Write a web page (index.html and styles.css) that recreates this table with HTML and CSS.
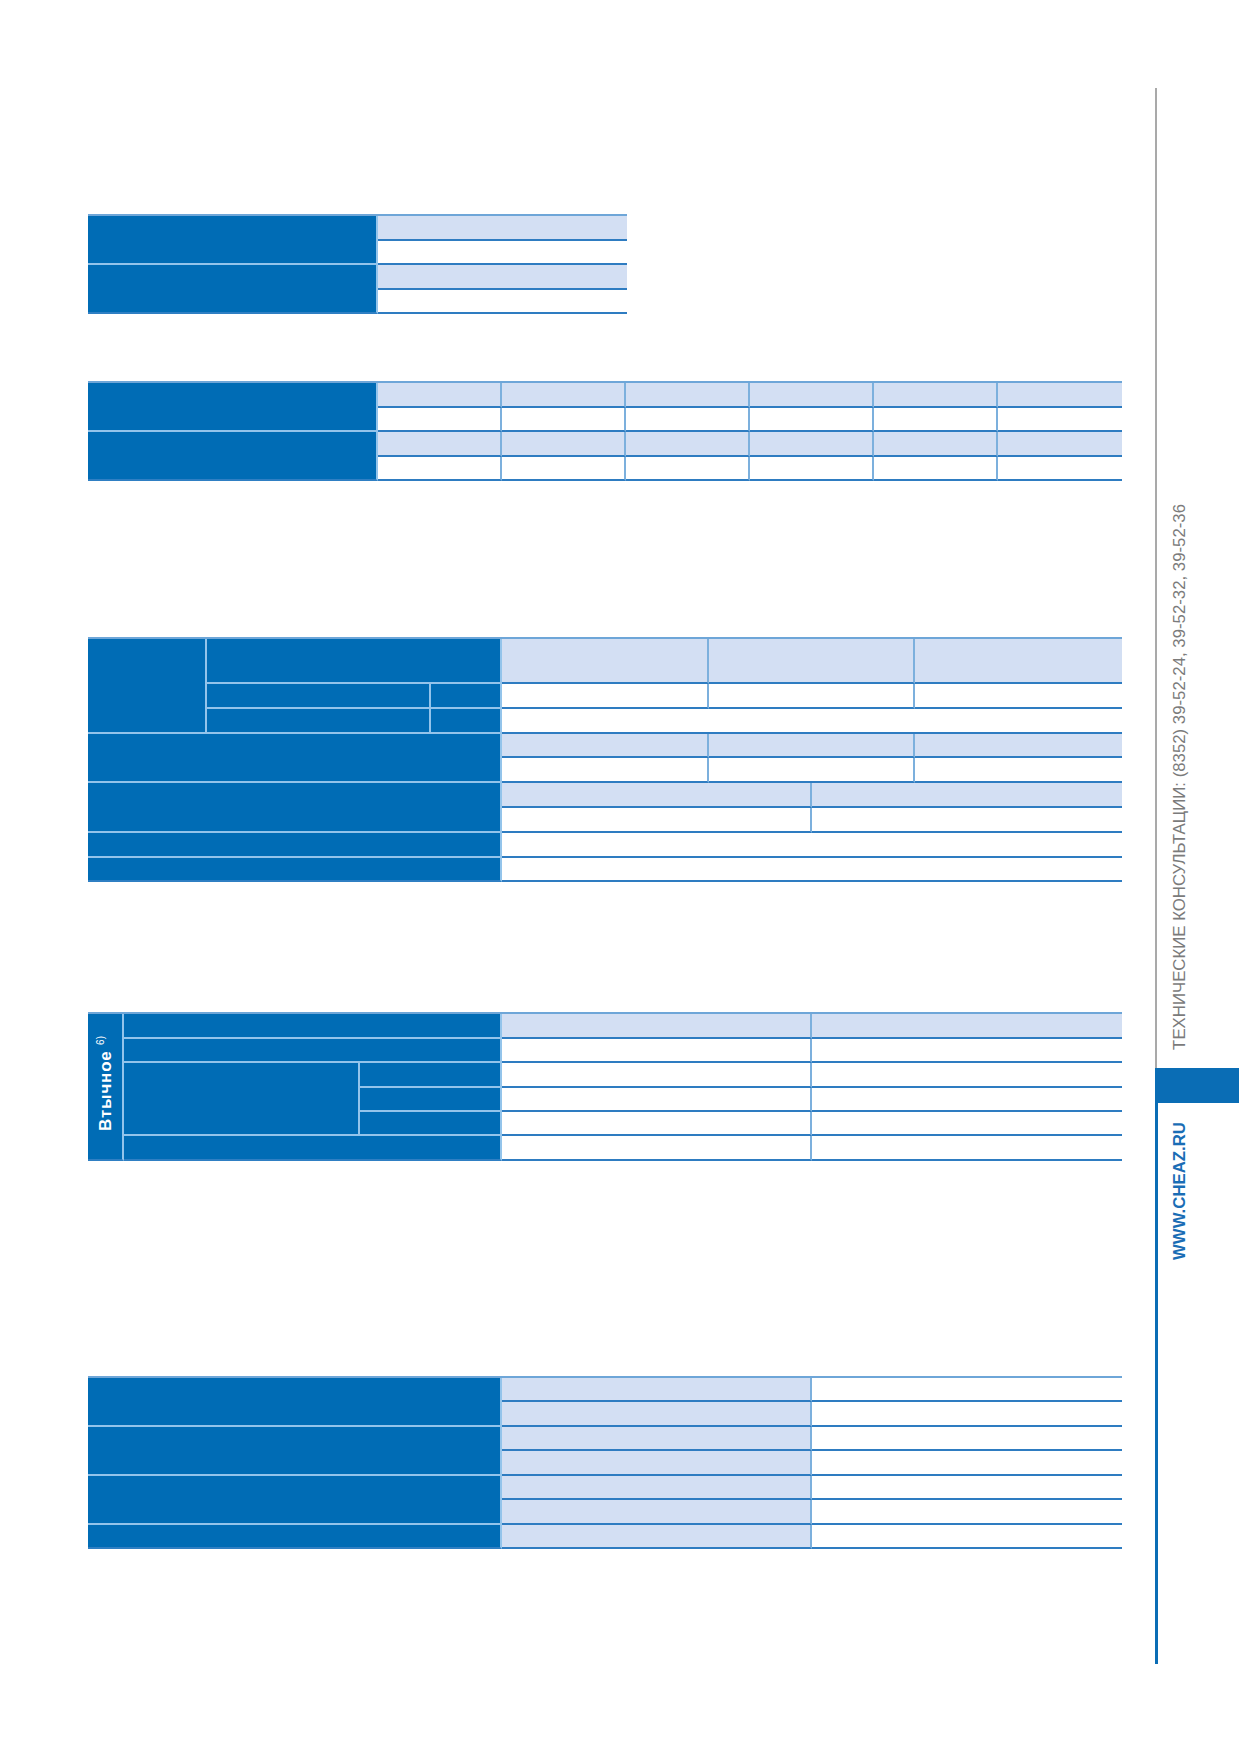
FILE: index.html
```html
<!DOCTYPE html>
<html lang="ru">
<head>
<meta charset="utf-8">
<title>Таблицы</title>
<link rel="stylesheet" href="styles.css">
</head>
<body>
<div class="page">
  <div class="main">
    <table class="tb t1">
      <colgroup><col class="w290"><col></colgroup>
      <tr><td class="h" rowspan="2"></td><td class="d l"></td></tr>
      <tr><td class="d"></td></tr>
      <tr><td class="h b" rowspan="2"></td><td class="d l"></td></tr>
      <tr><td class="d"></td></tr>
    </table>

    <table class="tb t2">
      <colgroup><col class="w290"><col><col><col><col><col><col></colgroup>
      <tr><td class="h" rowspan="2"></td><td class="d l"></td><td class="d l"></td><td class="d l"></td><td class="d l"></td><td class="d l"></td><td class="d l"></td></tr>
      <tr><td class="d"></td><td class="d"></td><td class="d"></td><td class="d"></td><td class="d"></td><td class="d"></td></tr>
      <tr><td class="h b" rowspan="2"></td><td class="d l"></td><td class="d l"></td><td class="d l"></td><td class="d l"></td><td class="d l"></td><td class="d l"></td></tr>
      <tr><td class="d"></td><td class="d"></td><td class="d"></td><td class="d"></td><td class="d"></td><td class="d"></td></tr>
    </table>

    <table class="tb t3">
      <colgroup><col class="w119"><col class="w224"><col class="w71"><col><col><col><col><col><col></colgroup>
      <tr class="tall"><td class="h" rowspan="3"></td><td class="h" colspan="2"></td><td class="d l" colspan="2"></td><td class="d l" colspan="2"></td><td class="d l" colspan="2"></td></tr>
      <tr><td class="h"></td><td class="h"></td><td class="d" colspan="2"></td><td class="d" colspan="2"></td><td class="d" colspan="2"></td></tr>
      <tr><td class="h"></td><td class="h"></td><td class="d" colspan="6"></td></tr>
      <tr><td class="h" colspan="3" rowspan="2"></td><td class="d l" colspan="2"></td><td class="d l" colspan="2"></td><td class="d l" colspan="2"></td></tr>
      <tr><td class="d" colspan="2"></td><td class="d" colspan="2"></td><td class="d" colspan="2"></td></tr>
      <tr><td class="h" colspan="3" rowspan="2"></td><td class="d l" colspan="3"></td><td class="d l" colspan="3"></td></tr>
      <tr><td class="d" colspan="3"></td><td class="d" colspan="3"></td></tr>
      <tr><td class="h" colspan="3"></td><td class="d" colspan="6"></td></tr>
      <tr><td class="h b" colspan="3"></td><td class="d" colspan="6"></td></tr>
    </table>

    <table class="tb t4">
      <colgroup><col class="w36"><col class="w236"><col class="w142"><col><col></colgroup>
      <tr><td class="h b rot" rowspan="6"><span class="vtext">Втычное <sup>6)</sup></span></td><td class="h" colspan="2"></td><td class="d l"></td><td class="d l"></td></tr>
      <tr><td class="h" colspan="2"></td><td class="d"></td><td class="d"></td></tr>
      <tr><td class="h" rowspan="3"></td><td class="h"></td><td class="d"></td><td class="d"></td></tr>
      <tr><td class="h"></td><td class="d"></td><td class="d"></td></tr>
      <tr><td class="h"></td><td class="d"></td><td class="d"></td></tr>
      <tr><td class="h b" colspan="2"></td><td class="d"></td><td class="d"></td></tr>
    </table>

    <table class="tb t5">
      <colgroup><col class="w414"><col><col></colgroup>
      <tr><td class="h" rowspan="2"></td><td class="d l"></td><td class="d"></td></tr>
      <tr><td class="d l"></td><td class="d"></td></tr>
      <tr><td class="h" rowspan="2"></td><td class="d l"></td><td class="d"></td></tr>
      <tr><td class="d l"></td><td class="d"></td></tr>
      <tr><td class="h" rowspan="2"></td><td class="d l"></td><td class="d"></td></tr>
      <tr><td class="d l"></td><td class="d"></td></tr>
      <tr><td class="h b"></td><td class="d l"></td><td class="d"></td></tr>
    </table>
  </div>

  <aside class="side">
    <div class="side-top">
      <span class="vside phone">ТЕХНИЧЕСКИЕ КОНСУЛЬТАЦИИ: (8352) 39-52-24, 39-52-32, 39-52-36</span>
    </div>
    <div class="side-block"></div>
    <div class="side-bottom">
      <span class="vside site">WWW.CHEAZ.RU</span>
    </div>
  </aside>
</div>
</body>
</html>
```

FILE: styles.css
```css
body {
  margin: 0;
  background: #ffffff;
  font-family: "Liberation Sans", Arial, sans-serif;
}

.page {
  display: flex;
  width: 1239px;
  min-height: 1752px;
}

.main {
  width: 1155px;
  box-sizing: border-box;
  padding-left: 88px;
  display: flex;
  flex-direction: column;
  align-items: flex-start;
}

/* tables */
.tb {
  border-collapse: separate;
  border-spacing: 0;
  table-layout: fixed;
  border-top: 2px solid #6ea6d8;
}

.tb tr { height: 24.5px; }
.t3 tr { height: 24.8px; }
.t3 tr.tall { height: 45px; }
.t4 tr { height: 24.4px; }

.tb td {
  padding: 0;
  box-sizing: border-box;
}

.t1 { width: 539px; margin-top: 214px; }
.t2 { width: 1034px; margin-top: 67px; }
.t3 { width: 1034px; margin-top: 156px; }
.t4 { width: 1034px; margin-top: 130px; }
.t5 { width: 1034px; margin-top: 215px; }

.w290 { width: 290px; }
.w119 { width: 119px; }
.w224 { width: 224px; }
.w71 { width: 71px; }
.w36 { width: 36px; }
.w236 { width: 236px; }
.w142 { width: 142px; }
.w414 { width: 414px; }

.h {
  background: #006cb5;
  border-bottom: 2px solid #93c4eb;
  border-right: 2px solid #93c4eb;
}

.h.b { border-bottom-color: #2f7fc3; }

.d {
  background: #ffffff;
  border-bottom: 2px solid #2e7cc1;
  border-right: 2px solid #7cb0dd;
}

.d:last-child { border-right: 0; }

.d.l { background: #d3dff3; }

/* rotated label inside table */
.rot {
  text-align: center;
  vertical-align: middle;
  padding-left: 3px;
}

.vtext {
  display: inline-block;
  writing-mode: vertical-rl;
  transform: rotate(180deg);
  color: #ffffff;
  font-weight: bold;
  font-size: 17px;
  letter-spacing: 0.8px;
  line-height: 1;
  white-space: nowrap;
  margin-bottom: 2px;
}

.vtext sup {
  font-size: 10px;
  font-weight: normal;
  letter-spacing: 0;
  vertical-align: 5px;
}

/* side strip */
.side {
  width: 84px;
  padding-top: 88px;
  display: flex;
  flex-direction: column;
}

.side-top {
  height: 980px;
  box-sizing: border-box;
  border-left: 2px solid #a9a9a9;
  padding-left: 15px;
  padding-bottom: 18px;
  display: flex;
  align-items: flex-end;
}

.side-block {
  height: 35px;
  background: #0a6db5;
}

.side-bottom {
  height: 561px;
  box-sizing: border-box;
  border-left: 3px solid #0a6db5;
  padding-left: 14px;
  padding-top: 19px;
  display: flex;
  align-items: flex-start;
}

.vside {
  display: inline-block;
  writing-mode: vertical-rl;
  transform: rotate(180deg);
  font-size: 16.8px;
  line-height: 1;
  white-space: nowrap;
}

.phone { color: #7b7b7b; }

.site {
  color: #1a6db5;
  font-weight: bold;
}
```
